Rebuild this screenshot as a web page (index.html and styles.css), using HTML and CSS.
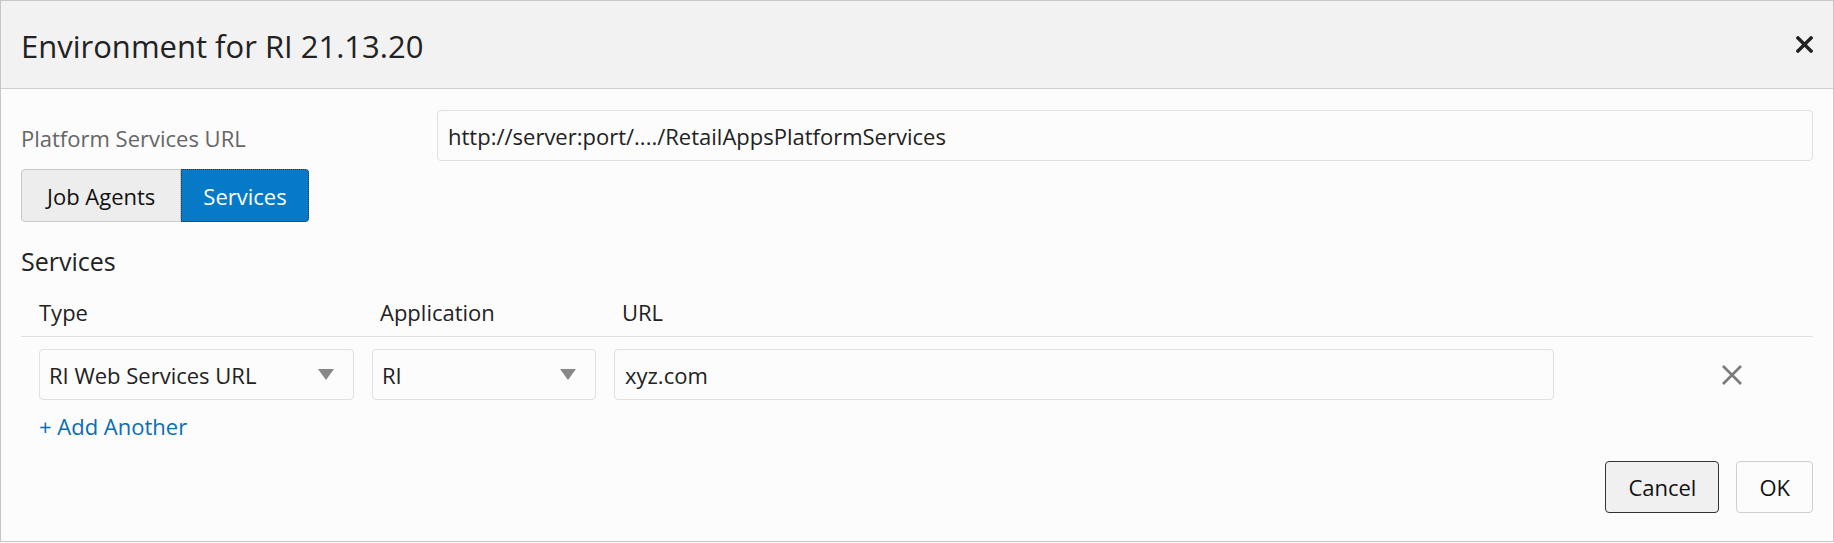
FILE: index.html
```html
<!DOCTYPE html>
<html lang="en">
<head>
  <meta charset="UTF-8">
  <title>Environment for RI 21.13.20</title>
  <link rel="stylesheet" href="styles.css">
</head>
<body>

  <div class="dialog">

    <!-- En-tete -->
    <div class="dialog-header">
      <h1>Environment for RI 21.13.20</h1>
      <button class="close-button" title="Close">
        <svg width="17" height="17" viewBox="0 0 17 17">
          <path d="M2 2 L15 15 M15 2 L2 15" stroke="#222" stroke-width="3.4" stroke-linecap="square"/>
        </svg>
      </button>
    </div>

    <div class="dialog-body">

      <div class="form-row">
        <label class="form-label">Platform Services URL</label>
        <input class="text-input url-input" type="text" value="http://server:port/..../RetailAppsPlatformServices">
      </div>

      <div class="button-set">
        <button class="set-button">Job Agents</button>
        <button class="set-button selected">Services</button>
      </div>

      <h2>Services</h2>

      <div class="services-table">
        <div class="table-head">
          <div class="col-type">Type</div>
          <div class="col-app">Application</div>
          <div class="col-url">URL</div>
        </div>

        <div class="table-row">
          <div class="col-type">
            <div class="select-box">
              <span>RI Web Services URL</span>
              <span class="select-arrow"></span>
            </div>
          </div>
          <div class="col-app">
            <div class="select-box">
              <span>RI</span>
              <span class="select-arrow"></span>
            </div>
          </div>
          <div class="col-url">
            <input class="text-input" type="text" value="xyz.com">
          </div>
          <div class="col-remove">
            <button class="remove-button" title="Remove">
              <svg width="22" height="22" viewBox="0 0 22 22">
                <path d="M2 2 L20 20 M20 2 L2 20" stroke="#7a7a7a" stroke-width="2.6"/>
              </svg>
            </button>
          </div>
        </div>

        <a class="add-link" href="#">+ Add Another</a>
      </div>

      <div class="dialog-footer">
        <button class="footer-button cancel">Cancel</button>
        <button class="footer-button">OK</button>
      </div>

    </div>
  </div>

</body>
</html>
```

FILE: styles.css
```css
html, body {
  margin: 0;
  padding: 0;
}

body {
  background-color: #fcfcfc;
  color: #333;
  font-family: "Open Sans", "Noto Sans", sans-serif;
  font-size: 22px;
  line-height: 30px;
}

.dialog {
  height: 542px;
  box-sizing: border-box;
  border: 1px solid #c6c6c6;
  background: #fcfcfc;
}

.dialog-header {
  height: 87px;
  background-color: #f2f2f2;
  border-bottom: 1px solid #cfcfcf;
  display: flex;
  align-items: center;
  justify-content: space-between;
  padding: 0 20px 0 20px;
}

.dialog-header h1 {
  margin: 0;
  font-size: 31px;
  line-height: 40px;
  font-weight: normal;
  color: #222;
  padding-top: 2px;
}

.close-button {
  background: none;
  border: none;
  padding: 0;
  display: flex;
  cursor: pointer;
}

.dialog-body {
  padding: 21px 20px 0 20px;
}

.form-row {
  display: flex;
  align-items: center;
}

.form-label {
  width: 416px;
  color: #666;
  padding-top: 4px;
}

.text-input {
  box-sizing: border-box;
  height: 51px;
  border: 1px solid #e0e0e0;
  border-radius: 4px;
  background: #fcfcfc;
  padding: 0 10px;
  font-family: inherit;
  font-size: 22px;
  color: #222;
}

.url-input {
  flex: 1;
}

.button-set {
  display: flex;
  margin-top: 8px;
}

.set-button {
  height: 53px;
  font-family: inherit;
  font-size: 22px;
  color: #111;
  background-color: #ededed;
  border: 1px solid #c8c8c8;
  border-radius: 4px 0 0 4px;
  padding: 0 25px;
  cursor: pointer;
}

.set-button.selected {
  background-color: #067ac6;
  color: #fff;
  border: 1px dotted #333;
  border-radius: 0 4px 4px 0;
  padding: 0 21px;
}

h2 {
  margin: 22px 0 0 0;
  font-size: 25px;
  line-height: 34px;
  font-weight: normal;
  color: #222;
}

.table-head {
  display: flex;
  padding: 19px 0 9px 0;
  border-bottom: 1px solid #e0e0e0;
  color: #222;
}

.table-row {
  display: flex;
  align-items: center;
  padding-top: 12px;
}

.col-type,
.col-app,
.col-url {
  box-sizing: border-box;
  padding-left: 18px;
}

.table-head .col-type {
  width: 341px;
}

.table-head .col-app {
  width: 242px;
}

.table-row .col-type {
  width: 333px;
}

.table-row .col-app {
  width: 242px;
}

.table-row .col-url {
  width: 958px;
}

.table-row .col-url .text-input {
  width: 100%;
}

.col-remove {
  flex: 1;
  display: flex;
  padding-left: 167px;
}

.select-box {
  box-sizing: border-box;
  height: 51px;
  border: 1px solid #e0e0e0;
  border-radius: 4px;
  display: flex;
  align-items: center;
  justify-content: space-between;
  padding: 0 19px 0 9px;
  color: #222;
}

.select-arrow {
  width: 0;
  height: 0;
  border-left: 8px solid transparent;
  border-right: 8px solid transparent;
  border-top: 11px solid #888;
}

.remove-button {
  background: none;
  border: none;
  padding: 0;
  display: flex;
  cursor: pointer;
}

.add-link {
  display: inline-block;
  margin: 11px 0 0 18px;
  color: #0a6db5;
  text-decoration: none;
}

.dialog-footer {
  display: flex;
  justify-content: flex-end;
  gap: 17px;
  margin-top: 20px;
}

.footer-button {
  height: 52px;
  font-family: inherit;
  font-size: 22px;
  color: #111;
  background-color: #fcfcfc;
  border: 1px solid #cfcfcf;
  border-radius: 4px;
  padding: 0 22px;
  cursor: pointer;
}

.footer-button.cancel {
  background-color: #f0f0f0;
  border-color: #333;
}
```
